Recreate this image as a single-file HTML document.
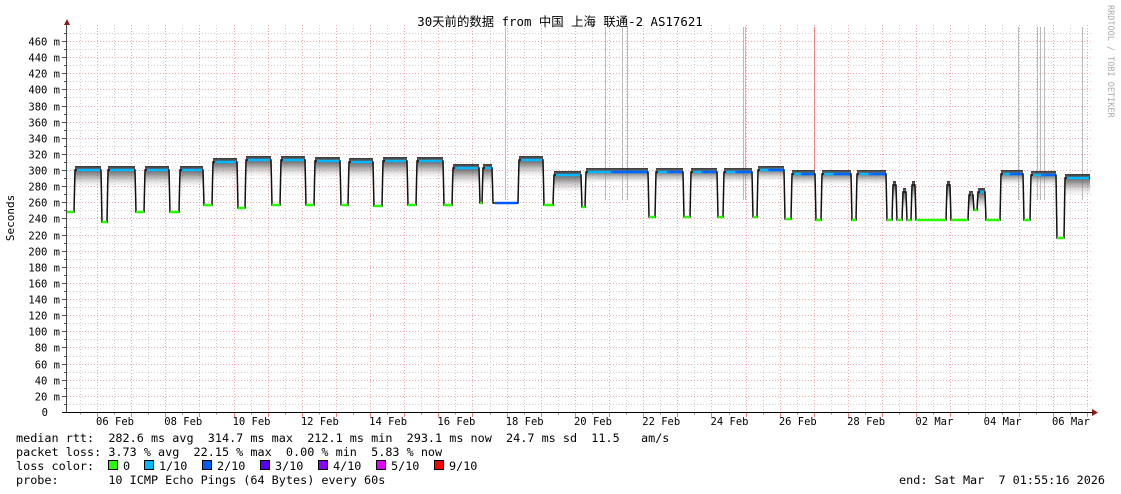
<!DOCTYPE html>
<html><head><meta charset="utf-8">
<style>
html,body{margin:0;padding:0;background:#fff;}
body{width:1121px;height:494px;overflow:hidden;position:relative;}
svg{position:absolute;left:0;top:0;}
text{font-family:"DejaVu Sans Mono","Liberation Mono","Noto Sans CJK SC",monospace;}
</style></head>
<body>
<svg id="g" width="1121" height="494" xmlns="http://www.w3.org/2000/svg">
<defs>
<linearGradient id="sm" x1="0" y1="0" x2="0" y2="1">
<stop offset="0" stop-color="#222" stop-opacity="0.9"/>
<stop offset="0.45" stop-color="#666" stop-opacity="0.65"/>
<stop offset="1" stop-color="#ccc" stop-opacity="0.15"/>
</linearGradient>
</defs>
<g id="grid"></g>
<g id="data"></g>
<line x1="66.5" y1="24" x2="66.5" y2="412" stroke="#444" stroke-width="1"/>
<line x1="62" y1="412.5" x2="1094" y2="412.5" stroke="#000" stroke-width="1"/>
<polygon points="64,25 70,25 67,19" fill="#8b1a1a"/>
<polygon points="1092,409 1092,416 1098,412.5" fill="#8b1a1a"/>
<g id="labels" font-size="10.5" fill="#000"></g>
<text x="560" y="26" font-size="12.4" text-anchor="middle" font-family="'DejaVu Sans Mono','Noto Sans CJK SC',monospace">30天前的数据 from 中国 上海 联通-2 AS17621</text>
<text transform="translate(14,218) rotate(-90)" font-size="11" text-anchor="middle">Seconds</text>
<text transform="translate(1108,5) rotate(90)" font-size="8.5" fill="#aaa">RRDTOOL / TOBI OETIKER</text>
<g font-size="11.8" fill="#000" xml:space="preserve">
<text x="16" y="442" xml:space="preserve">median rtt:  282.6 ms avg  314.7 ms max  212.1 ms min  293.1 ms now  24.7 ms sd  11.5   am/s</text>
<text x="16" y="456" xml:space="preserve">packet loss: 3.73 % avg  22.15 % max  0.00 % min  5.83 % now</text>
<text x="16" y="470" xml:space="preserve">loss color:  </text>
<text x="16" y="484" xml:space="preserve">probe:       10 ICMP Echo Pings (64 Bytes) every 60s</text>
<text x="1105" y="484" text-anchor="end" xml:space="preserve">end: Sat Mar  7 01:55:16 2026</text>
</g>
<g id="leg" font-size="11.8"></g>
</svg>
<script>
var NS="http://www.w3.org/2000/svg";
function el(p,t,a,txt){var e=document.createElementNS(NS,t);for(var k in a)e.setAttribute(k,a[k]);if(txt!=null)e.textContent=txt;p.appendChild(e);return e;}
var grid=document.getElementById("grid"),lab=document.getElementById("labels");
function Y(v){return 412-v*371/460;}
for(var v=10;v<=470;v+=10){var y=Math.round(Y(v))+0.5;var major=v%20==0;
el(grid,"line",{x1:67,x2:1092,y1:y,y2:y,stroke:major?"#f0a8a8":"#d0d0d0","stroke-dasharray":"1,2","stroke-width":1});
el(grid,"line",{x1:major?62:64,x2:67,y1:y,y2:y,stroke:"#555","stroke-width":1});
if(major&&v<=460)el(lab,"text",{x:60,y:y+4,"text-anchor":"end","font-size":"10.5"},v+" m");}
el(lab,"text",{x:48,y:416,"text-anchor":"end","font-size":"10.5"},"0");
for(var k=0;k<60;k++){var x=1087-17.07*k;if(x<68)break;var xr=Math.round(x)+0.5;var major=(k%2==0);
el(grid,"line",{x1:xr,x2:xr,y1:25,y2:412,stroke:major?"#f0a8a8":"#d0d0d0","stroke-dasharray":"1,2","stroke-width":1});
el(grid,"line",{x1:xr,x2:xr,y1:412,y2:major?417:415,stroke:major?"#f08080":"#aaa","stroke-width":1});}
var dl=["06 Feb","08 Feb","10 Feb","12 Feb","14 Feb","16 Feb","18 Feb","20 Feb","22 Feb","24 Feb","26 Feb","28 Feb","02 Mar","04 Mar","06 Mar"];
for(var i=0;i<dl.length;i++)el(lab,"text",{x:115+68.28*i,y:425,"text-anchor":"middle","font-size":"10.5"},dl[i]);
var sp=[505,605,622,627,743,745,1018,1037,1040,1044,1082];
for(var i=0;i<sp.length;i++)el(grid,"line",{x1:sp[i]+.5,x2:sp[i]+.5,y1:27,y2:200,stroke:"#bbb","stroke-width":1});
el(grid,"line",{x1:814.5,x2:814.5,y1:27,y2:170,stroke:"#f08080","stroke-width":1});
var S=[[67,74,212,'l'],[75,101,170,'h'],[102,107,222,'l'],[108,135,170,'h'],[136,144,212,'l'],[145,169,170,'h'],[170,179,212,'l'],[180,203,170,'h'],[204,212,205,'l'],[213,237,162,'h'],[238,245,208,'l'],[246,271,160,'h'],[272,280,205,'l'],[281,305,160,'h'],[306,314,205,'l'],[315,340,161,'h'],[341,348,205,'l'],[349,373,162,'h'],[374,382,206,'l'],[383,407,161,'h'],[408,416,205,'l'],[417,443,161,'h'],[444,452,205,'l'],[453,479,168,'h'],[480,482,203,'l'],[483,492,168,'h'],[493,518,203,'b'],[519,543,160,'h'],[544,553,205,'l'],[554,581,175,'h'],[582,585,207,'l'],[586,648,172,'c'],[649,655,217,'l'],[656,683,172,'c'],[684,690,217,'l'],[691,717,172,'c'],[718,723,217,'l'],[724,752,172,'c'],[753,757,217,'l'],[758,784,170,'c'],[785,791,219,'l'],[792,815,174,'c'],[816,821,220,'l'],[822,851,174,'c'],[852,856,220,'l'],[857,886,174,'c'],[887,892,220,'l'],[893,896,185,'h'],[897,902,220,'l'],[903,906,192,'h'],[907,911,220,'l'],[912,915,185,'h'],[916,946,220,'l'],[947,950,185,'h'],[951,968,220,'l'],[969,973,195,'h'],[974,977,210,'l'],[978,985,192,'h'],[986,1000,220,'l'],[1001,1023,174,'c'],[1024,1030,220,'l'],[1031,1056,175,'c'],[1057,1064,238,'l'],[1065,1090,178,'h']];
var d=document.getElementById("data");
for(var i=0;i<S.length;i++){var s=S[i];if(s[3]=='l'||s[3]=='b')continue;
var h=(s[3]=='c')?14:20;
el(d,"rect",{x:s[0],y:s[2]-4,width:s[1]-s[0],height:h,fill:"url(#sm)"});}
var p="M"+S[0][0]+","+S[0][2];
for(var i=0;i<S.length;i++){var s=S[i];p+=" L"+s[0]+","+s[2]+" L"+s[1]+","+s[2];}
el(d,"path",{d:p,fill:"none",stroke:"#111","stroke-width":1.5});
var col={l:"#26ff00",h:"#00b8ff",b:"#0059ff",c:"#0066ff"};
for(var i=0;i<S.length;i++){var s=S[i];var c=col[s[3]];
if(s[3]=='c'){el(d,"line",{x1:s[0]+2,x2:s[1]-1,y1:s[2],y2:s[2],stroke:"#00b8ff","stroke-width":2.5});
el(d,"line",{x1:s[0]+(s[1]-s[0])*0.4,x2:s[1]-1,y1:s[2],y2:s[2],stroke:c,"stroke-width":2.5});}
else el(d,"line",{x1:s[0]+(s[3]=='l'?0:2),x2:s[1]-(s[3]=='l'?0:1),y1:s[2],y2:s[2],stroke:c,"stroke-width":2.5});}
var leg=document.getElementById("leg");
var L=[[108,"#26ff00","0"],[144,"#00b8ff","1/10"],[202,"#0059ff","2/10"],[260,"#5500ff","3/10"],[318,"#8800ff","4/10"],[376,"#dd00ff","5/10"],[434,"#ff0000","9/10"]];
for(var i=0;i<L.length;i++){el(leg,"rect",{x:L[i][0]+.5,y:460.5,width:9,height:9,fill:L[i][1],stroke:"#000","stroke-width":1});
el(leg,"text",{x:L[i][0]+15,y:470},L[i][2]);}
</script>
</body></html>
